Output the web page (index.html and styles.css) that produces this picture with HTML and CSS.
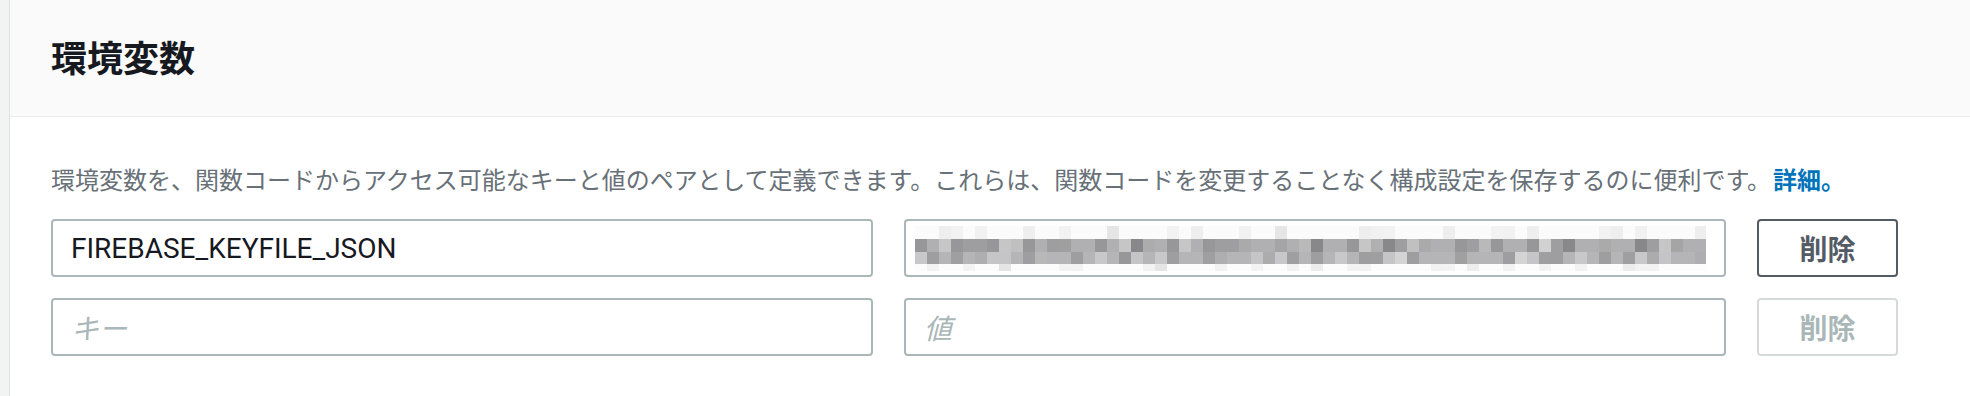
FILE: index.html
```html
<!DOCTYPE html>
<html lang="ja">
<head>
<meta charset="utf-8">
<title>環境変数</title>
<link rel="stylesheet" href="styles.css">
</head>
<body>
<div class="page">
  <div class="rail"></div>
  <section class="panel">
    <header class="panel-header">
      <h2 class="panel-title">環境変数</h2>
    </header>
    <div class="panel-body">
      <p class="desc">環境変数を、関数コードからアクセス可能なキーと値のペアとして定義できます。これらは、関数コードを変更することなく構成設定を保存するのに便利です。<a class="link" href="#">詳細。</a></p>
      <div class="env-grid">
        <div class="field"><span class="field-value">FIREBASE_KEYFILE_JSON</span></div>
        <div class="field field-masked">
          <div class="mosaic">
            <div class="mosaic-row mosaic-light-a"></div>
            <div class="mosaic-row mosaic-dark-a"></div>
            <div class="mosaic-row mosaic-dark-b"></div>
            <div class="mosaic-row mosaic-light-b"></div>
          </div>
        </div>
        <button class="btn" type="button">削除</button>

        <div class="field"><span class="field-placeholder">キー</span></div>
        <div class="field"><span class="field-placeholder">値</span></div>
        <button class="btn btn-disabled" type="button" disabled>削除</button>
      </div>
    </div>
  </section>
</div>
</body>
</html>
```

FILE: styles.css
```css
* {
  box-sizing: border-box;
}

html, body {
  margin: 0;
  padding: 0;
  background: #ffffff;
}

body {
  width: 1970px;
  height: 396px;
  overflow: hidden;
  font-family: "Noto Sans CJK JP", "Noto Sans", sans-serif;
}

.page {
  display: flex;
  height: 396px;
}

.rail {
  width: 10px;
  flex: 0 0 10px;
  background: #f2f3f3;
  border-right: 1px solid #dfe3e3;
}

.panel {
  flex: 1;
  display: flex;
  flex-direction: column;
}

.panel-header {
  background: #fafafa;
  border-bottom: 1px solid #eaeded;
  height: 117px;
  padding: 34px 0 0 41px;
}

.panel-title {
  margin: 0;
  font-size: 36px;
  line-height: 44px;
  font-weight: 700;
  color: #16191f;
}

.panel-body {
  padding: 44px 0 0 41px;
}

.desc {
  margin: 0 0 22px;
  font-size: 24px;
  line-height: 36px;
  color: #687078;
  white-space: nowrap;
}

.link {
  margin-left: 2px;
  color: #0073bb;
  font-weight: 700;
  text-decoration: none;
}

.env-grid {
  display: grid;
  grid-template-columns: 822px 822px 141px;
  grid-auto-rows: 58px;
  column-gap: 31px;
  row-gap: 21px;
}

.field {
  border: 2px solid #aab7b8;
  border-radius: 4px;
  background: #ffffff;
  display: flex;
  align-items: center;
  padding: 0 18px;
  overflow: hidden;
}

.field-value {
  font-family: Roboto, "Noto Sans CJK JP", sans-serif;
  font-size: 28px;
  color: #16191f;
}

.field-placeholder {
  font-size: 28px;
  font-style: italic;
  color: #aab7b8;
}

.field-masked {
  padding: 0 9px;
}

.mosaic {
  width: 791px;
  height: 45px;
  display: flex;
  flex-direction: column;
}

.mosaic-row {
  width: 100%;
}

.mosaic-light-a {
  height: 13px;
  background-color: #fbfbfb;
  background-image:
    repeating-linear-gradient(90deg, transparent 0 24px, rgba(0,0,0,0.05) 24px 36px, transparent 36px 84px),
    repeating-linear-gradient(90deg, transparent 0 60px, rgba(0,0,0,0.04) 60px 72px, transparent 72px 132px),
    repeating-linear-gradient(90deg, transparent 0 36px, rgba(0,0,0,0.035) 36px 48px, transparent 48px 108px);
}

.mosaic-dark-a {
  height: 13px;
  background-color: #b0b0b2;
  background-image:
    repeating-linear-gradient(90deg, rgba(0,0,0,0.14) 0 12px, transparent 12px 36px),
    repeating-linear-gradient(90deg, transparent 0 24px, rgba(255,255,255,0.28) 24px 36px, transparent 36px 60px),
    repeating-linear-gradient(90deg, transparent 0 48px, rgba(0,0,0,0.1) 48px 72px, transparent 72px 84px),
    repeating-linear-gradient(90deg, transparent 0 96px, rgba(255,255,255,0.2) 96px 108px, transparent 108px 132px);
}

.mosaic-dark-b {
  height: 12px;
  background-color: #b5b5b7;
  background-image:
    repeating-linear-gradient(90deg, transparent 0 12px, rgba(0,0,0,0.13) 12px 24px, transparent 24px 48px),
    repeating-linear-gradient(90deg, rgba(255,255,255,0.26) 0 12px, transparent 12px 60px),
    repeating-linear-gradient(90deg, transparent 0 36px, rgba(0,0,0,0.12) 36px 48px, transparent 48px 84px),
    repeating-linear-gradient(90deg, transparent 0 72px, rgba(255,255,255,0.22) 72px 96px, transparent 96px 132px);
}

.mosaic-light-b {
  height: 7px;
  background-color: #fcfcfc;
  background-image:
    repeating-linear-gradient(90deg, transparent 0 12px, rgba(0,0,0,0.04) 12px 24px, transparent 24px 72px),
    repeating-linear-gradient(90deg, transparent 0 48px, rgba(0,0,0,0.035) 48px 60px, transparent 60px 96px),
    repeating-linear-gradient(90deg, transparent 0 84px, rgba(0,0,0,0.06) 84px 96px, transparent 96px 156px);
}

.btn {
  border: 2px solid #545b64;
  border-radius: 4px;
  background: #ffffff;
  color: #545b64;
  font-family: "Noto Sans CJK JP", sans-serif;
  font-size: 28px;
  font-weight: 700;
  padding: 0;
  cursor: pointer;
}

.btn-disabled {
  border-color: #d5dbdb;
  color: #aab7b8;
  cursor: default;
}
```
